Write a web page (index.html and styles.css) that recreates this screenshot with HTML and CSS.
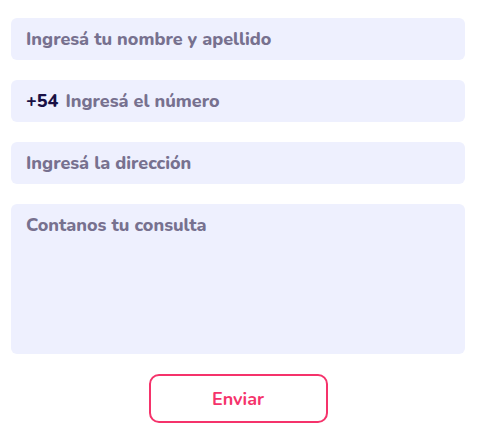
FILE: index.html
```html
<!DOCTYPE html>
<html lang="es">
<head>
<meta charset="utf-8">
<link rel="stylesheet" href="styles.css">
</head>
<body>
<form class="form">
  <div class="field"><input class="input" type="text" placeholder="Ingresá tu nombre y apellido"></div>
  <div class="field field-phone"><span class="prefix">+54</span><input class="input" type="tel" placeholder="Ingresá el número"></div>
  <div class="field"><input class="input" type="text" placeholder="Ingresá la dirección"></div>
  <div class="field field-area"><textarea class="textarea" placeholder="Contanos tu consulta"></textarea></div>
  <div class="actions"><button class="btn" type="button">Enviar</button></div>
</form>
</body>
</html>
```
FILE: styles.css
```css
* { box-sizing: border-box; }
html, body { margin: 0; padding: 0; background: #fff; }
body { font-family: "Nunito", "Lato", "Noto Sans", sans-serif; }
.form {
  width: 454px;
  margin: 18px 0 0 11px;
  display: flex;
  flex-direction: column;
  gap: 20px;
}
.field {
  height: 42px;
  background: #eef0fe;
  border-radius: 6px;
  display: flex;
  align-items: center;
  padding: 0 15px;
}
.field-area { height: 150px; align-items: stretch; padding: 0; }
.input, .textarea {
  flex: 1;
  min-width: 0;
  border: 0;
  outline: 0;
  background: transparent;
  font-family: inherit;
  font-weight: 800;
  font-size: 18px;
  color: #1b1242;
  padding: 0;
}
.input::placeholder, .textarea::placeholder { color: #77718f; opacity: 1; }
.textarea { resize: none; padding: 9px 15px; line-height: 24px; }
.prefix {
  font-weight: 800;
  font-size: 18px;
  color: #1a1045;
  margin-right: 7px;
}
.actions { display: flex; justify-content: center; }
.btn {
  width: 179px;
  height: 49px;
  border: 2px solid #f5336b;
  border-radius: 10px;
  background: #fff;
  color: #f5336b;
  font-family: inherit;
  font-weight: 700;
  font-size: 18px;
}
```
